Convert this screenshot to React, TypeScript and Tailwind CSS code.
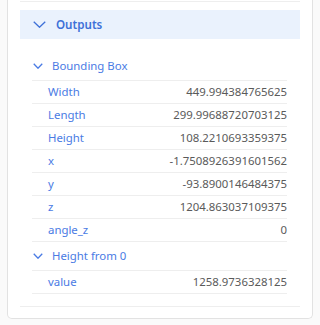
import React from 'react';

type Row = { label: string; value: string };

const boundingBox: Row[] = [
  { label: 'Width', value: '449.994384765625' },
  { label: 'Length', value: '299.99688720703125' },
  { label: 'Height', value: '108.2210693359375' },
  { label: 'x', value: '-1.7508926391601562' },
  { label: 'y', value: '-93.8900146484375' },
  { label: 'z', value: '1204.863037109375' },
  { label: 'angle_z', value: '0' },
];

const heightFrom0: Row[] = [{ label: 'value', value: '1258.9736328125' }];

function Chevron({ w, h }: { w: number; h: number }) {
  return (
    <svg width={w} height={h} viewBox={`0 0 ${w} ${h}`} fill="none">
      <path d={`M0.75 0.75L${w / 2} ${h - 0.75}L${w - 0.75} 0.75`} stroke="currentColor" strokeWidth="1.3" />
    </svg>
  );
}

function Group({ title, rows }: { title: string; rows: Row[] }) {
  return (
    <div>
      <div className="flex h-[29px] items-center border-b border-[#eeeeee] pl-[1px] text-[#4a7be4]">
        <Chevron w={10} h={6} />
        <span className="ml-[9px]">{title}</span>
      </div>
      {rows.map((r) => (
        <div key={r.label} className="flex h-[23px] items-center justify-between border-b border-[#eeeeee] pl-[16px]">
          <span className="text-[#4a7be4]">{r.label}</span>
          <span className="text-[#5a5a5a]">{r.value}</span>
        </div>
      ))}
    </div>
  );
}

export default function App() {
  return (
    <div
      className="h-[325px] w-[320px] bg-[#fafafa] px-[7px] pb-[6px] text-[11.4px]"
      style={{ fontFamily: '"Noto Sans", "Open Sans", sans-serif' }}
    >
      <div className="flex h-full flex-col rounded-b-[5px] border border-t-0 border-[#e2e2e2] bg-white px-[12px]">
        <div className="h-[2px] border-b border-[#eeeeee]" />
        <div className="mt-[8px] border-b border-[#eeeeee] pb-[12px]">
          <div className="flex h-[29px] items-center bg-[#eaf2fd] px-[13px] text-[11.6px] font-semibold text-[#3d70d8]">
            <Chevron w={13} h={7} />
            <span className="ml-[10px]">Outputs</span>
          </div>
          <div className="pl-[12px] pr-[13px] pt-[13px]">
            <Group title="Bounding Box" rows={boundingBox} />
            <Group title="Height from 0" rows={heightFrom0} />
          </div>
        </div>
      </div>
    </div>
  );
}
